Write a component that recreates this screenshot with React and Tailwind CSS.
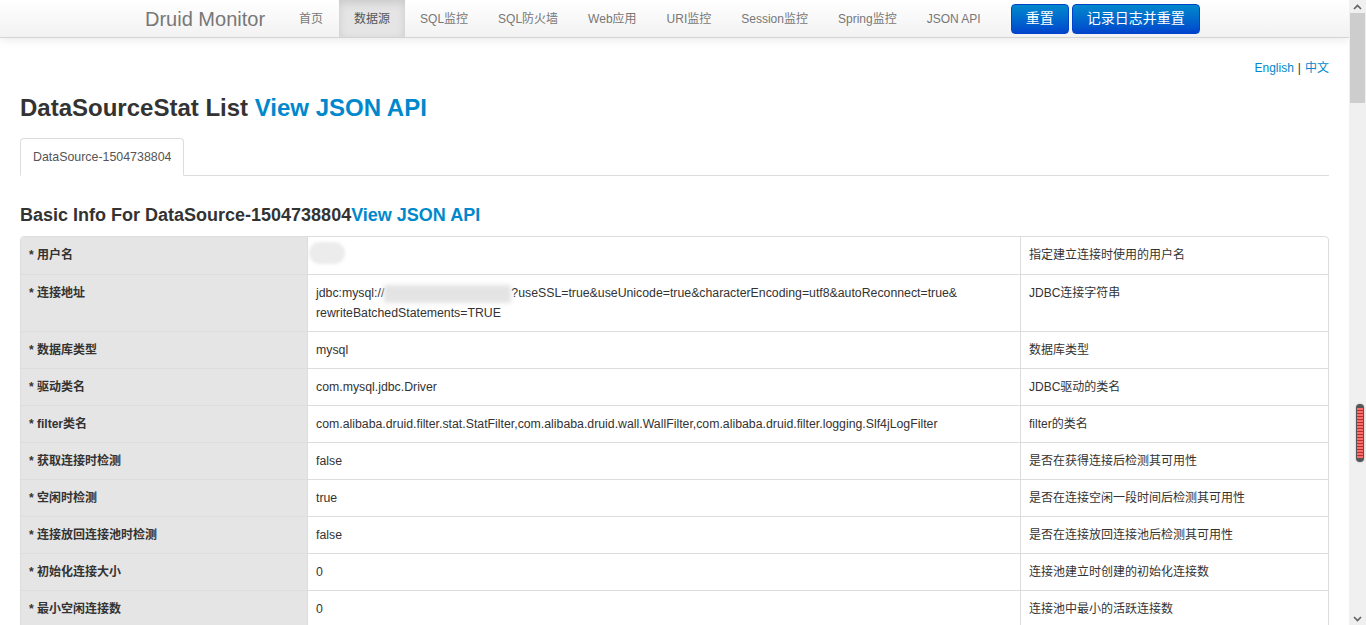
import React from "react";

const FONT = "font-['Liberation_Sans','Noto_Sans_CJK_SC',sans-serif]";

const navItems = ["首页", "数据源", "SQL监控", "SQL防火墙", "Web应用", "URI监控", "Session监控", "Spring监控", "JSON API"];

const rows = [
  { k: "* 用户名", v: "__user__", d: "指定建立连接时使用的用户名" },
  { k: "* 连接地址", v: "__url__", d: "JDBC连接字符串" },
  { k: "* 数据库类型", v: "mysql", d: "数据库类型" },
  { k: "* 驱动类名", v: "com.mysql.jdbc.Driver", d: "JDBC驱动的类名" },
  { k: "* filter类名", v: "com.alibaba.druid.filter.stat.StatFilter,com.alibaba.druid.wall.WallFilter,com.alibaba.druid.filter.logging.Slf4jLogFilter", d: "filter的类名" },
  { k: "* 获取连接时检测", v: "false", d: "是否在获得连接后检测其可用性" },
  { k: "* 空闲时检测", v: "true", d: "是否在连接空闲一段时间后检测其可用性" },
  { k: "* 连接放回连接池时检测", v: "false", d: "是否在连接放回连接池后检测其可用性" },
  { k: "* 初始化连接大小", v: "0", d: "连接池建立时创建的初始化连接数" },
  { k: "* 最小空闲连接数", v: "0", d: "连接池中最小的活跃连接数" },
  { k: "* 最大活跃连接数", v: "8", d: "连接池中最大的活跃连接数" },
];

function Value({ v }) {
  if (v === "__user__") {
    return <span className="inline-block w-[36px] h-[22px] -ml-[7px] mt-[-3px] rounded-full bg-[#ececec] blur-[1.5px] align-top" />;
  }
  if (v === "__url__") {
    return (
      <>
        jdbc:mysql://
        <span className="inline-block w-[127px] h-[18px] bg-[#e4e4e4] blur-[2px] align-middle" />
        ?useSSL=true&amp;useUnicode=true&amp;characterEncoding=utf8&amp;autoReconnect=true&amp;
        <br />
        rewriteBatchedStatements=TRUE
      </>
    );
  }
  return v;
}

export default function App() {
  return (
    <div className={`${FONT} flex w-[1366px] h-[625px] overflow-hidden bg-white text-[#333]`}>
      <div className="flex-1 min-w-0 flex flex-col">
        {/* navbar */}
        <div className="h-[38px] shrink-0 bg-gradient-to-b from-[#ffffff] to-[#f2f2f2] border-b border-[#d4d4d4] shadow-[0_1px_10px_rgba(0,0,0,0.1)] flex items-center pl-[145px]">
          <div className="text-[20px] leading-[38px] text-[#777] pr-[19px]">Druid Monitor</div>
          <div className="flex h-full">
            {navItems.map((n, i) => (
              <div
                key={n}
                className={`h-full px-[15px] flex items-center text-[12px] ${
                  i === 1 ? "bg-[#e5e5e5] text-[#555] shadow-[inset_0_3px_8px_rgba(0,0,0,0.125)] ml-[1px]" : "text-[#777]"
                }`}
              >
                {n}
              </div>
            ))}
          </div>
          <div className="flex gap-[3px] ml-[15px]">
            <div className="h-[30px] px-[14px] flex items-center rounded-[4px] border border-[#0044cc] bg-gradient-to-b from-[#0088cc] to-[#0044cc] text-white text-[14px]">重置</div>
            <div className="h-[30px] px-[14px] flex items-center rounded-[4px] border border-[#0044cc] bg-gradient-to-b from-[#0088cc] to-[#0044cc] text-white text-[14px]">记录日志并重置</div>
          </div>
        </div>

        {/* content */}
        <div className="px-[20px]">
          <div className="mt-[21px] flex justify-end text-[12px] leading-[18px]">
            <span className="text-[#0088cc]">English</span>
            <span className="mx-[4px] text-[#333]">|</span>
            <span className="text-[#0088cc]">中文</span>
          </div>
          <h1 className="mt-[11px] text-[24px] leading-[40px] font-bold">
            DataSourceStat List <span className="text-[#0088cc]">View JSON API</span>
          </h1>
          <div className="mt-[10px] flex border-b border-[#ddd]">
            <div className="-mb-px border border-[#ddd] border-b-white rounded-t-[4px] bg-white px-[12px] py-[8px] text-[12.4px] leading-[20px] text-[#555]">
              DataSource-1504738804
            </div>
          </div>
          <h3 className="mt-[27px] mb-[9px] text-[18px] leading-[24px] font-bold">
            Basic Info For DataSource-1504738804<span className="text-[#0088cc]">View JSON API</span>
          </h3>
          <div className="border border-[#ddd] rounded-[4px] overflow-hidden text-[12px] leading-[20px]">
            {rows.map((r, i) => (
              <div key={i} className={`grid grid-cols-[286px_713px_1fr] ${i > 0 ? "border-t border-[#ddd]" : ""}`}>
                <div className={`bg-[#e5e5e5] px-[8px] pt-[8px] font-bold ${i === 0 ? "pb-[9px]" : "pb-[8px]"}`}>{r.k}</div>
                <div className="border-l border-[#ddd] p-[8px] text-[12.3px]">
                  <Value v={r.v} />
                </div>
                <div className="border-l border-[#ddd] p-[8px]">{r.d}</div>
              </div>
            ))}
          </div>
        </div>
      </div>

      {/* scrollbar */}
      <div className="relative w-[17px] shrink-0 bg-[#f0f0f0] flex flex-col">
        <div className="h-[13px] flex items-center justify-center">
          <svg width="9" height="6" viewBox="0 0 9 6"><path d="M1 5 L4.5 1.5 L8 5" stroke="#606060" strokeWidth="1.6" fill="none" /></svg>
        </div>
        <div className="h-[90px] mx-[1px] bg-[#cdcdcd]" />
        <div className="flex-1" />
        <div className="h-[13px] flex items-center justify-center">
          <svg width="9" height="6" viewBox="0 0 9 6"><path d="M1 1 L4.5 4.5 L8 1" stroke="#606060" strokeWidth="1.6" fill="none" /></svg>
        </div>
        <div className="absolute left-[7px] top-[404px] w-[8px] h-[58px] rounded-full bg-[#555] shadow-[0_0_2px_rgba(0,0,0,0.3)] px-[1px] py-[4px]">
          <div className="h-full w-full bg-[repeating-linear-gradient(to_bottom,#ff6b6b_0px,#ff6b6b_2px,#a33_2px,#a33_3px)]" />
        </div>
      </div>
    </div>
  );
}
